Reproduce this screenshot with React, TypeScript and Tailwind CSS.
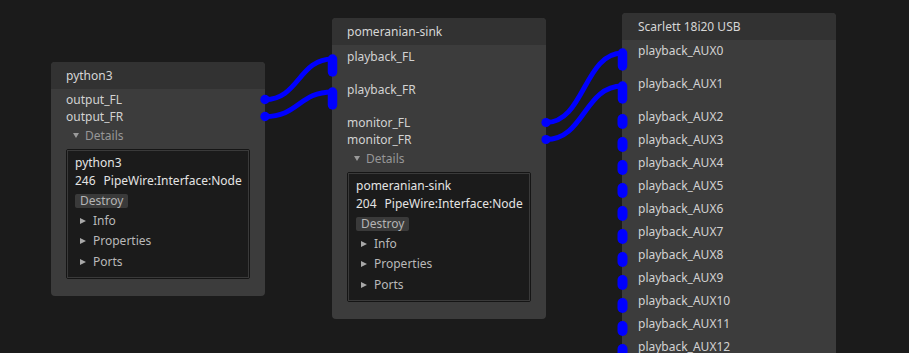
import React from "react";

type Port = { name: string; kind: "in" | "out"; linked?: boolean };

const HEADER = 27;

const rowHeight = (p: Port) => (p.kind === "out" ? 17 : p.linked ? 33 : 23);

// y of each port label's centre, in page coordinates
function portCentres(top: number, padTop: number, ports: Port[]) {
  let y = top + HEADER + padTop;
  return ports.map((p) => {
    const c = y + 8.5;
    y += rowHeight(p);
    return c;
  });
}

const pythonPorts: Port[] = [
  { name: "output_FL", kind: "out" },
  { name: "output_FR", kind: "out" },
];

const sinkPorts: Port[] = [
  { name: "playback_FL", kind: "in", linked: true },
  { name: "playback_FR", kind: "in", linked: true },
  { name: "monitor_FL", kind: "out" },
  { name: "monitor_FR", kind: "out" },
];

const scarlettPorts: Port[] = Array.from({ length: 14 }, (_, i) => ({
  name: `playback_AUX${i}`,
  kind: "in" as const,
  linked: i < 2,
}));

function Caret({ open }: { open?: boolean }) {
  return open ? (
    <svg width="6" height="5" viewBox="0 0 6 5" className="shrink-0">
      <polygon points="0,0 6,0 3,5" fill="#9a9a9a" />
    </svg>
  ) : (
    <svg width="6" height="6" viewBox="0 0 6 6" className="shrink-0">
      <polygon points="0,0 6,3 0,6" fill="#a8a8a8" />
    </svg>
  );
}

function PortRow({ port }: { port: Port }) {
  const h =
    port.kind === "out" ? "h-[17px]" : port.linked ? "h-[33px]" : "h-[23px]";
  return (
    <div className={`${h} shrink-0`}>
      <div className="h-[17px] flex items-center text-[#d2d2d2] whitespace-nowrap">
        {port.name}
      </div>
    </div>
  );
}

function DetailsPanel({ name, id }: { name: string; id: number }) {
  return (
    <>
      <div className="h-[21px] flex items-center gap-[6px] pl-[7px] text-[#979797]">
        <Caret open />
        <span>Details</span>
      </div>
      <div className="mt-[3px] mr-[15px] h-[130px] border border-[#151515] rounded-[2px]">
        <div className="h-full border border-[#3a3a3a] bg-[#1b1b1b] pt-[3px] pl-[7px] flex flex-col">
          <div className="h-[18px] flex items-center text-[#e4e4e4]">{name}</div>
          <div className="h-[18px] flex items-center gap-[8px] text-[#e4e4e4] whitespace-nowrap">
            <span>{id}</span>
            <span>PipeWire:Interface:Node</span>
          </div>
          <div className="mt-[1px] h-[20px] flex items-center">
            <span className="h-[14px] px-[5px] flex items-center rounded-[2px] bg-[#3a3a3a] text-[#b4b4b4]">
              Destroy
            </span>
          </div>
          {["Info", "Properties", "Ports"].map((label, i) => (
            <div
              key={label}
              className={`${i === 0 ? "h-[19px]" : "h-[21px]"} flex items-center gap-[7px] pl-[5px] text-[#b9b9b9]`}
            >
              <Caret />
              <span>{label}</span>
            </div>
          ))}
        </div>
      </div>
    </>
  );
}

function Node({
  title,
  ports,
  pos,
  padTop,
  padLeft,
  children,
}: {
  title: string;
  ports: Port[];
  pos: string;
  padTop: string;
  padLeft: string;
  children?: React.ReactNode;
}) {
  return (
    <div className={`absolute ${pos} w-[214px] rounded-[4px] bg-[#3c3c3c] overflow-hidden`}>
      <div className={`h-[27px] bg-[#323232] flex items-center ${padLeft} text-[#d6d6d6]`}>
        {title}
      </div>
      <div className={`flex flex-col ${padTop} ${padLeft} pb-[17px]`}>
        {ports.map((p) => (
          <PortRow key={p.name} port={p} />
        ))}
        {children}
      </div>
    </div>
  );
}

export default function App() {
  const outA = portCentres(62, 2, pythonPorts);
  const sinkY = portCentres(18, 3, sinkPorts);
  const auxY = portCentres(13, 2, scarlettPorts);

  const wire = (x0: number, y0: number, x1: number, y1: number) => {
    const dx = (x1 - x0) / 2;
    return `M${x0},${y0} C${x0 + dx},${y0} ${x1 - dx},${y1} ${x1},${y1}`;
  };

  const inPill = (x: number, c: number, linked?: boolean, key?: string) => (
    <line
      key={key}
      x1={x}
      x2={x}
      y1={c + 2.5}
      y2={linked ? c + 15.5 : c + 7.5}
      stroke="#0000ff"
      strokeWidth={linked ? 9.5 : 10}
      strokeLinecap="round"
    />
  );

  return (
    <div className="relative w-[909px] h-[353px] overflow-hidden bg-[#1b1b1b] text-[12px] font-['Noto_Sans','DejaVu_Sans',sans-serif]">
      <Node title="python3" ports={pythonPorts} pos="left-[51px] top-[62px]" padTop="pt-[2px]" padLeft="pl-[15px]">
        <DetailsPanel name="python3" id={246} />
      </Node>

      <Node title="pomeranian-sink" ports={sinkPorts} pos="left-[332px] top-[18px]" padTop="pt-[3px]" padLeft="pl-[15px]">
        <DetailsPanel name="pomeranian-sink" id={204} />
      </Node>

      <Node title="Scarlett 18i20 USB" ports={scarlettPorts} pos="left-[622px] top-[13px]" padTop="pt-[2px]" padLeft="pl-[16px]" />

      {/* links and port handles */}
      <svg className="absolute inset-0 pointer-events-none" width="909" height="353">
        <g fill="none" stroke="#0000ff" strokeWidth="5" strokeLinecap="round">
          <path d={wire(265, outA[0], 332.5, sinkY[0] + 2.5)} />
          <path d={wire(265, outA[1], 332.5, sinkY[1] + 2.5)} />
          <path d={wire(546, sinkY[2], 622.5, auxY[0] + 2.5)} />
          <path d={wire(546, sinkY[3], 622.5, auxY[1] + 2.5)} />
        </g>
        <circle cx="265" cy={outA[0]} r="4.7" fill="#0000ff" />
        <circle cx="265" cy={outA[1]} r="4.7" fill="#0000ff" />
        <circle cx="546" cy={sinkY[2]} r="4.6" fill="#0000ff" />
        <circle cx="546" cy={sinkY[3]} r="4.6" fill="#0000ff" />
        {inPill(332.5, sinkY[0], true)}
        {inPill(332.5, sinkY[1], true)}
        {scarlettPorts.map((p, i) => inPill(622.5, auxY[i], p.linked, p.name))}
      </svg>
    </div>
  );
}
